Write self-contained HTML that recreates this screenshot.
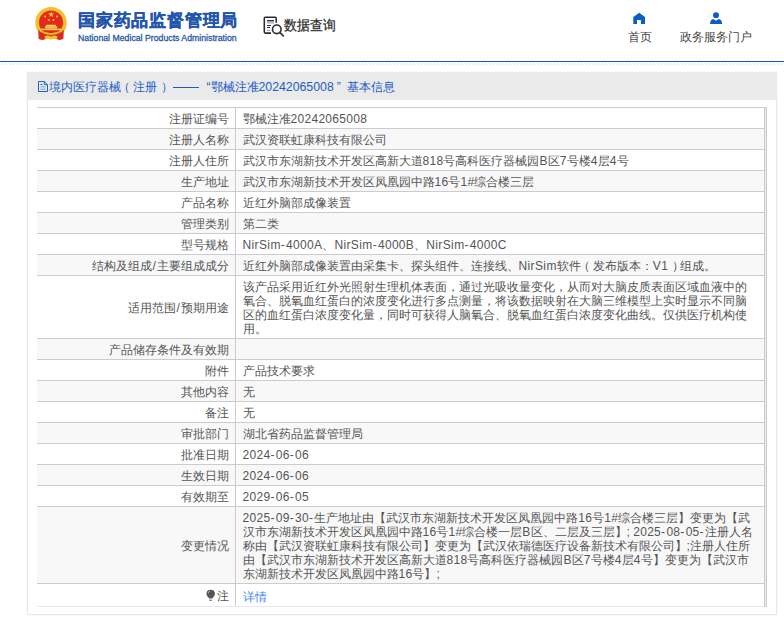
<!DOCTYPE html>
<html><head><meta charset="utf-8">
<style>
*{margin:0;padding:0;box-sizing:border-box}
html,body{width:784px;height:624px;overflow:hidden;background:#fff;font-family:"Liberation Sans",sans-serif;color:#555}
.hdr{position:absolute;left:0;top:0;width:784px;height:61px;background:#fff}
.bline{position:absolute;left:0;top:61px;width:784px;height:1px;background:#075dc8}
.dots{position:absolute;left:0;top:63px;width:784px;height:2px}
.emb{position:absolute;left:35px;top:7px;width:33px;height:34px}
.t1{position:absolute;left:78px;top:8.5px;font-size:17px;letter-spacing:0.8px;font-weight:700;color:#2456ad;-webkit-text-stroke:0.35px #2456ad;white-space:nowrap;line-height:24px}
.t2{position:absolute;left:78px;top:31.5px;font-size:9.6px;transform-origin:0 0;transform:scaleX(0.91);color:#2756a8;-webkit-text-stroke:0.3px #2756a8;white-space:nowrap;line-height:12px}
.sq{position:absolute;left:260px;top:12px;width:28px;height:28px}
.sqt{position:absolute;left:284px;top:14.5px;font-size:14px;transform-origin:0 0;transform:scaleX(0.92);color:#2a2a2a;-webkit-text-stroke:0.25px #2a2a2a;white-space:nowrap;line-height:20px}
.nav1{position:absolute;left:628px;top:29px;font-size:12px;color:#444;line-height:16px}
.nav2{position:absolute;left:680px;top:29px;font-size:12px;color:#444;line-height:16px}
.ico1{position:absolute;left:628px;top:8px;width:24px;height:20px}
.ico2{position:absolute;left:704px;top:8px;width:24px;height:20px}
.panel{position:absolute;left:27px;top:72px;width:750px;height:543px;border:1px solid #e8e8e8;border-top:none;background:#fff;box-shadow:0 0 2px rgba(0,0,0,0.05)}
.ph{position:absolute;left:-1px;top:0;width:750px;height:28px;background:#eaeaea;border-bottom:1px solid #e9ebf6}
.pico{position:absolute;left:11px;top:9px;width:10px;height:11px}
.dash{display:inline-block;width:26px;height:1px;border-top:1.3px solid #1d5cc8;margin-left:3.5px;vertical-align:2.5px}
.lq{display:inline-block;width:12px;text-align:right}
.rq{display:inline-block;width:10.5px;text-align:left;margin-left:3px}
.lp{position:relative;left:-3px}
.rp{position:relative;left:3.5px}
.dg{font-size:12.3px}
.pt{position:absolute;left:22px;top:6.5px;font-size:12px;color:#1d5cc8;white-space:nowrap;line-height:16px}
table{position:absolute;left:9px;top:35px;width:730px;border-collapse:collapse;font-size:12px;line-height:14px}
td{border:1px solid #cdcbce;padding:4px 6px 2px 7px;white-space:nowrap;vertical-align:middle}
td.l{width:198px;text-align:right;padding-right:6px;border-left:none}
td.v{border-right:1px solid #cdcbce}
.rb{position:absolute;left:764px;top:107px;width:3px;height:500px;border-left:1px solid #cdcbce;border-right:1px solid #cdcbce;border-top:1px solid #cdcbce;background:#e6e9f4}
tr:nth-child(even) td{background:#f8f8f8}
tr.last td{border-bottom:1px solid #e6e9f4;padding-top:5px;padding-bottom:3px}
a{color:#3e85f6;text-decoration:none;position:relative;top:1px}
i{font-style:normal}
.sl{letter-spacing:0.67px;padding-left:0.5px}
.a{letter-spacing:0.38px}
.n{letter-spacing:0.3px}
.h{letter-spacing:1.3px}
</style></head><body>
<div class="hdr">
  <svg class="emb" viewBox="0 0 33 34">
    <circle cx="16" cy="15.7" r="15.7" fill="#f2c12e"/>
    <circle cx="16" cy="15.5" r="12" fill="#e5291d"/>
    <path d="M3.2 23 L3.6 31.8 Q6 33.6 9.5 32.6 L12 30 Q16 32 20 30 L22.5 32.6 Q26 33.6 28.4 31.8 L28.8 23 Q16 31 3.2 23Z" fill="#de2a1e"/>
    <path d="M5 23.8 Q16 30.5 27 23.8" fill="none" stroke="#f2c12e" stroke-width="1.6"/>
    <path d="M6 21.6H26V23.2H6Z" fill="#f6d54a"/>
    <path d="M10 19.4H22V21.6H10Z" fill="#f3c73c"/>
    <path d="M11.5 17.8H20.5L21.5 19.4H10.5Z" fill="#f6dc70"/>
    <path d="M9.5 29.2Q12.5 27.5 16 29.5Q19.5 27.5 22.5 29.2L21.5 32.5Q19 31 16 32.8Q13 31 10.5 32.5Z" fill="#f2c12e"/>
    <path d="M16.2 4.3l0.8 2.2h2.3l-1.9 1.4 0.7 2.2-1.9-1.4-1.9 1.4 0.7-2.2-1.9-1.4h2.3z" fill="#f6d23e"/>
    <circle cx="10.1" cy="9.5" r="1" fill="#f6d23e"/><circle cx="22" cy="9.5" r="1" fill="#f6d23e"/>
    <circle cx="13.7" cy="13" r="1" fill="#f6d23e"/><circle cx="18.5" cy="13" r="1" fill="#f6d23e"/>
  </svg>
  <div class="t1">国家药品监督管理局</div>
  <div class="t2">National Medical Products Administration</div>
  <svg class="sq" viewBox="0 0 28 28">
    <path d="M16.2 10.8V6.2Q16.2 5.2 15.2 5.2H5.3Q4.3 5.2 4.3 6.2V20.1Q4.3 21.1 5.3 21.1H11" fill="none" stroke="#2a2a3a" stroke-width="1.55"/>
    <path d="M7 8.5H14M7 13.5H11M7 15.5H10" stroke="#2e2e3e" stroke-width="1"/>
    <path d="M7 9.7H14M7 10.9H14M7 18.4H10" stroke="#8a8a92" stroke-width="0.9"/>
    <circle cx="16.8" cy="17.3" r="4.3" fill="none" stroke="#2a2a3a" stroke-width="1.6"/>
    <path d="M19.8 20.4L23.3 23.8" stroke="#2e2e3e" stroke-width="1.7" stroke-linecap="round"/>
  </svg>
  <div class="sqt">数据查询</div>
  <svg class="ico1" viewBox="0 0 24 20"><path d="M5.3 9.1L11.2 4.8L17 9.1V15.9H13V11.9H9V15.9H5.3Z" fill="#0b5ec8"/></svg>
  <svg class="ico2" viewBox="0 0 24 20"><circle cx="12" cy="7.2" r="3" fill="#0b5ec8"/><path d="M6.1 16Q6.1 11.5 9.4 10.9L12 12.8L14.6 10.9Q18.1 11.5 18.1 16Z" fill="#0b5ec8"/></svg>
  <div class="nav1">首页</div>
  <div class="nav2">政务服务门户</div>
</div>
<div class="bline"></div>
<svg class="dots" width="784" height="2"><defs><pattern id="dp" width="3" height="2" patternUnits="userSpaceOnUse"><rect x="2" y="0" width="1" height="1" fill="#e2e2e2"/><rect x="1" y="1" width="1" height="1" fill="#e2e2e2"/></pattern></defs><rect width="784" height="2" fill="url(#dp)"/></svg>
<div class="panel">
  <div class="ph">
    <svg class="pico" viewBox="0 0 10 11"><path d="M0.5 0.5H6.3L9.5 3.7V10.5H0.5Z M6.3 0.5V3.7H9.5" fill="none" stroke="#1f60cc" stroke-width="1"/><path d="M2.5 3.5H4.5" stroke="#1f60cc" stroke-width="1"/><path d="M2.5 5.8H7.5M2.5 8.2H7.5" stroke="#7f9fdc" stroke-width="1"/></svg><div class="pt">境内医疗器械<span class="lp">（</span>注册<span class="rp">）</span><span class="dash"></span><span class="lq">“</span>鄂械注准<span class="dg">20242065008</span><span class="rq">”</span>基本信息</div>
  </div>
  <table>
    <tr><td class="l">注册证编号</td><td class="v">鄂械注准<i class="n">20242065008</i></td></tr>
    <tr><td class="l">注册人名称</td><td class="v">武汉资联虹康科技有限公司</td></tr>
    <tr><td class="l">注册人住所</td><td class="v">武汉市东湖新技术开发区高新大道<i class="n">818</i>号高科医疗器械园<i class="a">B</i>区<i class="n">7</i>号楼<i class="n">4</i>层<i class="n">4</i>号</td></tr>
    <tr><td class="l">生产地址</td><td class="v">武汉市东湖新技术开发区凤凰园中路<i class="n">16</i>号<i class="n">1</i>#综合楼三层</td></tr>
    <tr><td class="l">产品名称</td><td class="v">近红外脑部成像装置</td></tr>
    <tr><td class="l">管理类别</td><td class="v">第二类</td></tr>
    <tr><td class="l">型号规格</td><td class="v"><i class="a">NirSim</i><i class="h">-</i><i class="n">4000</i><i class="a">A</i>、<i class="a">NirSim</i><i class="h">-</i><i class="n">4000</i><i class="a">B</i>、<i class="a">NirSim</i><i class="h">-</i><i class="n">4000</i><i class="a">C</i></td></tr>
    <tr><td class="l">结构及组成<i class="sl">/</i>主要组成成分</td><td class="v">近红外脑部成像装置由采集卡、探头组件、连接线、<i class="a">NirSim</i>软件<span class="lp">（</span>发布版本：<i class="a">V</i><i class="n">1</i><span class="rp">）</span>组成。</td></tr>
    <tr><td class="l">适用范围<i class="sl">/</i>预期用途</td><td class="v">该产品采用近红外光照射生理机体表面，通过光吸收量变化，从而对大脑皮质表面区域血液中的<br>氧合、脱氧血红蛋白的浓度变化进行多点测量，将该数据映射在大脑三维模型上实时显示不同脑<br>区的血红蛋白浓度变化量，同时可获得人脑氧合、脱氧血红蛋白浓度变化曲线。仅供医疗机构使<br>用。</td></tr>
    <tr><td class="l">产品储存条件及有效期</td><td class="v"></td></tr>
    <tr><td class="l">附件</td><td class="v">产品技术要求</td></tr>
    <tr><td class="l">其他内容</td><td class="v">无</td></tr>
    <tr><td class="l">备注</td><td class="v">无</td></tr>
    <tr><td class="l">审批部门</td><td class="v">湖北省药品监督管理局</td></tr>
    <tr><td class="l">批准日期</td><td class="v"><i class="n">2024</i><i class="h">-</i><i class="n">06</i><i class="h">-</i><i class="n">06</i></td></tr>
    <tr><td class="l">生效日期</td><td class="v"><i class="n">2024</i><i class="h">-</i><i class="n">06</i><i class="h">-</i><i class="n">06</i></td></tr>
    <tr><td class="l">有效期至</td><td class="v"><i class="n">2029</i><i class="h">-</i><i class="n">06</i><i class="h">-</i><i class="n">05</i></td></tr>
    <tr><td class="l">变更情况</td><td class="v"><i class="n">2025</i><i class="h">-</i><i class="n">09</i><i class="h">-</i><i class="n">30</i><i class="h">-</i>生产地址由【武汉市东湖新技术开发区凤凰园中路<i class="n">16</i>号<i class="n">1</i>#综合楼三层】变更为【武<br>汉市东湖新技术开发区凤凰园中路<i class="n">16</i>号<i class="n">1</i>#综合楼一层<i class="a">B</i>区、二层及三层】; <i class="n">2025</i><i class="h">-</i><i class="n">08</i><i class="h">-</i><i class="n">05</i><i class="h">-</i>注册人名<br>称由【武汉资联虹康科技有限公司】变更为【武汉依瑞德医疗设备新技术有限公司】;注册人住所<br>由【武汉市东湖新技术开发区高新大道<i class="n">818</i>号高科医疗器械园<i class="a">B</i>区<i class="n">7</i>号楼<i class="n">4</i>层<i class="n">4</i>号】变更为【武汉市<br>东湖新技术开发区凤凰园中路<i class="n">16</i>号】;</td></tr>
    <tr class="last"><td class="l">注</td><td class="v"><a>详情</a></td></tr>
  </table>
</div>
<svg style="position:absolute;left:206px;top:589px" width="10" height="13" viewBox="0 0 10 13"><path d="M4.7 0.8Q8.9 0.8 8.9 4.8Q8.9 6.8 7 8.5L6.2 9.6H3.2L2.4 8.5Q0.5 6.8 0.5 4.8Q0.5 0.8 4.7 0.8Z" fill="#555"/><path d="M2.2 4.2Q2.5 2.5 4 2" stroke="#c8c8c8" stroke-width="0.9" fill="none"/><path d="M3.3 11.2H6" stroke="#555" stroke-width="1"/></svg>
<div class="rb"></div>
</body></html>
